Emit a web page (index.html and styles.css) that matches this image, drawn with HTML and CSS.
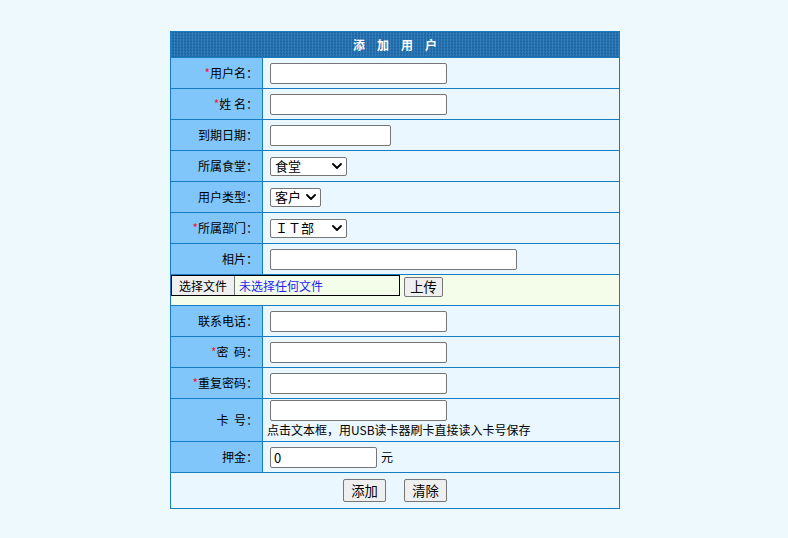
FILE: index.html
```html
<!DOCTYPE html>
<html lang="zh-CN">
<head>
<meta charset="utf-8">
<title>添加用户</title>
<link rel="stylesheet" href="styles.css">
</head>
<body>
<div class="page">
<table class="form">
  <colgroup><col class="c-label"><col class="c-value"></colgroup>
  <thead>
    <tr><th colspan="2" class="title">添 加 用 户</th></tr>
  </thead>
  <tbody>
    <tr>
      <td class="label"><span class="req">*</span>用户名：</td>
      <td class="value"><input class="txt w177" type="text"></td>
    </tr>
    <tr>
      <td class="label"><span class="req">*</span>姓 名：</td>
      <td class="value"><input class="txt w177" type="text"></td>
    </tr>
    <tr>
      <td class="label">到期日期：</td>
      <td class="value"><input class="txt w121" type="text"></td>
    </tr>
    <tr>
      <td class="label">所属食堂：</td>
      <td class="value"><span class="selwrap w77"><select class="sel"><option>食堂</option></select><svg class="chev" viewBox="0 0 10 6" width="10" height="6"><path d="M1 1 L5 5 L9 1" fill="none" stroke="#000" stroke-width="1.8" stroke-linecap="round" stroke-linejoin="round"/></svg></span></td>
    </tr>
    <tr>
      <td class="label">用户类型：</td>
      <td class="value"><span class="selwrap w51"><select class="sel"><option>客户</option></select><svg class="chev" viewBox="0 0 10 6" width="10" height="6"><path d="M1 1 L5 5 L9 1" fill="none" stroke="#000" stroke-width="1.8" stroke-linecap="round" stroke-linejoin="round"/></svg></span></td>
    </tr>
    <tr>
      <td class="label"><span class="req">*</span>所属部门：</td>
      <td class="value"><span class="selwrap w77"><select class="sel"><option>ＩＴ部</option></select><svg class="chev" viewBox="0 0 10 6" width="10" height="6"><path d="M1 1 L5 5 L9 1" fill="none" stroke="#000" stroke-width="1.8" stroke-linecap="round" stroke-linejoin="round"/></svg></span></td>
    </tr>
    <tr>
      <td class="label">相片：</td>
      <td class="value"><input class="txt w247" type="text"></td>
    </tr>
    <tr>
      <td colspan="2" class="filerow">
        <div class="fileline">
          <span class="filebox"><span class="filebtn">选择文件</span><span class="filename">未选择任何文件</span></span>
          <button class="btn upload" type="button">上传</button>
        </div>
      </td>
    </tr>
    <tr>
      <td class="label">联系电话：</td>
      <td class="value"><input class="txt w177" type="text"></td>
    </tr>
    <tr>
      <td class="label"><span class="req">*</span>密&nbsp;&nbsp;码：</td>
      <td class="value"><input class="txt w177" type="password"></td>
    </tr>
    <tr>
      <td class="label"><span class="req">*</span>重复密码：</td>
      <td class="value"><input class="txt w177" type="password"></td>
    </tr>
    <tr>
      <td class="label">卡&nbsp;&nbsp;号：</td>
      <td class="value card">
        <input class="txt w177 blk" type="text">
        <div class="hint">点击文本框，用USB读卡器刷卡直接读入卡号保存</div>
      </td>
    </tr>
    <tr>
      <td class="label">押金：</td>
      <td class="value"><input class="txt w107" type="text" value="0"><span class="unit">元</span></td>
    </tr>
    <tr>
      <td colspan="2" class="actions">
        <div class="btns">
          <button class="btn big" type="button">添加</button>
          <button class="btn big" type="button">清除</button>
        </div>
      </td>
    </tr>
  </tbody>
</table>
</div>
</body>
</html>
```

FILE: styles.css
```css
html, body {
  margin: 0;
  padding: 0;
}
body {
  background: #eef9fe;
  font-family: "Noto Sans CJK SC", "Noto Sans", sans-serif;
  font-size: 12px;
  color: #000;
}
.page {
  display: flex;
  justify-content: center;
  padding: 31px 0 0 2px;
}
.form {
  width: 450px;
  border-collapse: collapse;
  border: 1px solid #137cc2;
  table-layout: fixed;
}
.c-label { width: 92px; }
.form th,
.form td {
  border: 1px solid #137cc2;
  padding: 0;
  height: 30px;
  line-height: 16px;
}
.form .title {
  height: 25px;
  color: #fff;
  font-weight: bold;
  font-size: 12px;
  text-align: center;
  letter-spacing: 4.6px;
  padding-left: 4.6px;
  background-color: #2574b8;
  background-image: repeating-conic-gradient(#175b98 0 25%, #3d8dcc 0 50%);
  background-size: 3px 3px;
}
.form .label {
  background: #80c6fb;
  text-align: right;
  padding-right: 4px;
  vertical-align: middle;
}
.req {
  color: #f0163c;
}
.form .value {
  background: #eaf7fe;
  padding-left: 4px;
  vertical-align: middle;
}
.txt {
  box-sizing: border-box;
  height: 21px;
  margin: 0 0 0 3px;
  padding: 1px 3px;
  border: 1px solid #767676;
  border-radius: 2px;
  background: #fff;
  font-family: "Noto Sans CJK SC", "Liberation Sans", sans-serif;
  font-size: 13px;
  line-height: 17px;
  color: #000;
  vertical-align: middle;
}
.w177 { width: 177px; }
.w121 { width: 121px; }
.w247 { width: 247px; }
.w107 { width: 107px; }
.w77 { width: 77px; }
.w51 { width: 51px; }
.blk { display: block; }
.selwrap {
  position: relative;
  display: inline-block;
  height: 19px;
  margin-left: 3px;
  vertical-align: middle;
}
.sel {
  -webkit-appearance: none;
  appearance: none;
  box-sizing: border-box;
  display: block;
  width: 100%;
  height: 19px;
  margin: 0;
  padding: 0 0 2px 4px;
  border: 1px solid #767676;
  border-radius: 2px;
  background: #fff;
  font-family: "Noto Sans CJK SC", "Liberation Sans", sans-serif;
  font-size: 13px;
  line-height: 15px;
  color: #000;
}
.chev {
  position: absolute;
  right: 5px;
  top: 6px;
  pointer-events: none;
}
.form .filerow {
  background: #f4fcea;
  vertical-align: top;
}
.fileline {
  display: flex;
  align-items: flex-start;
  gap: 4px;
}
.filebox {
  display: flex;
  align-items: center;
  box-sizing: border-box;
  width: 229px;
  height: 21px;
  border: 1px solid #000;
  background: #f4fcea;
}
.filebtn {
  box-sizing: border-box;
  height: 19px;
  padding: 0 7px;
  background: #efefef;
  border-right: 1px solid #767676;
  line-height: 19px;
  font-size: 12px;
  color: #000;
}
.filename {
  margin-left: 4px;
  font-size: 12px;
  color: #1f1ff5;
  line-height: 19px;
}
.btn {
  box-sizing: border-box;
  margin: 0;
  padding: 0;
  border: 1px solid #767676;
  border-radius: 2px;
  background: #efefef;
  font-family: "Noto Sans CJK SC", "Liberation Sans", sans-serif;
  font-size: 13.33px;
  color: #000;
  line-height: 16px;
}
.upload {
  width: 39px;
  height: 20px;
  margin-top: 2px;
}
.form .card {
  vertical-align: top;
  padding-top: 1px;
  height: 41px;
}
.hint {
  line-height: 18px;
}
.unit {
  margin-left: 4px;
  vertical-align: middle;
}
.form .actions {
  height: 35px;
  background: #eaf7fe;
}
.btns {
  display: flex;
  justify-content: center;
  gap: 18px;
}
.big {
  width: 43px;
  height: 23px;
}
```
